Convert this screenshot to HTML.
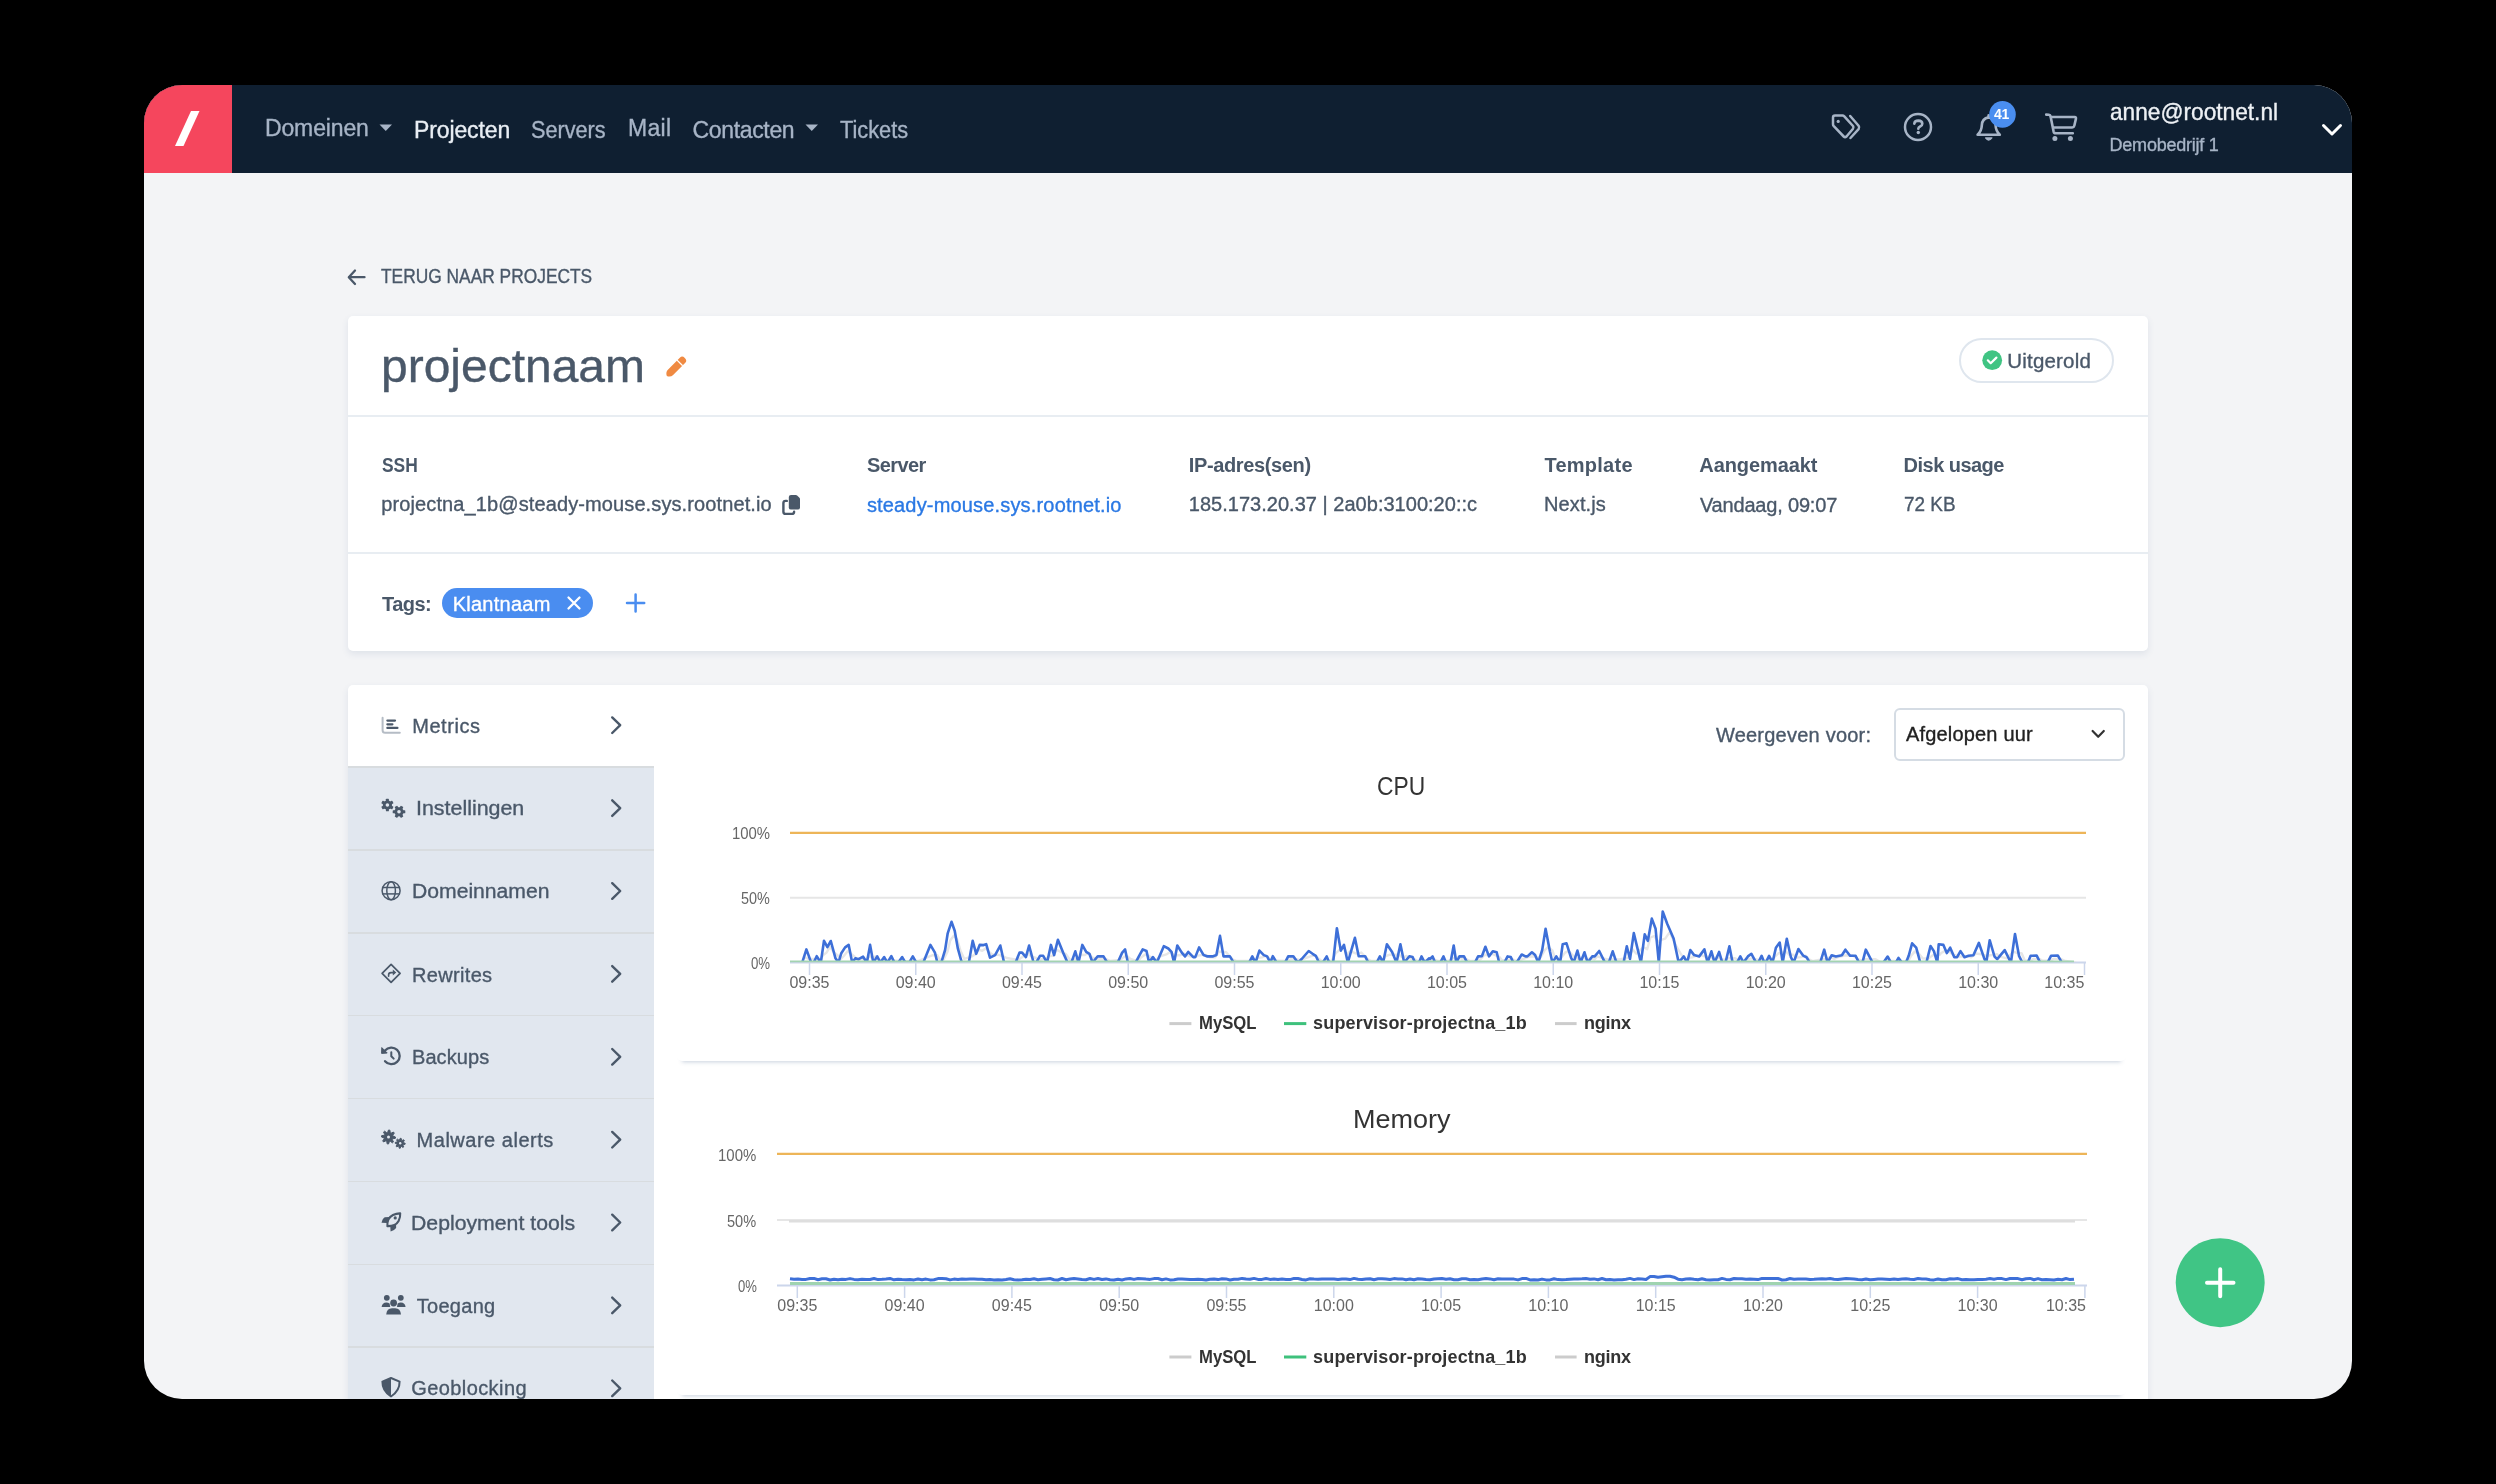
<!DOCTYPE html>
<html><head><meta charset='utf-8'><title>projectnaam</title>
<style>
html,body{margin:0;padding:0;background:#000;}
body{width:2496px;height:1484px;overflow:hidden;position:relative;font-family:"Liberation Sans",sans-serif;}
#win{position:absolute;left:0;top:0;width:2496px;height:1484px;background:#f3f4f6;clip-path:inset(85px 144px 85px 144px round 38px);}
.abs{position:absolute;box-sizing:content-box;}
.t{position:absolute;white-space:pre;line-height:1;}
#txt{position:absolute;left:0;top:0;width:2496px;height:1484px;will-change:transform;}
.card{background:#fff;border-radius:5px;box-shadow:0 3px 7px rgba(50,80,130,0.10);}
.chartcard{background:#fff;border-radius:5px;box-shadow:0 6px 4px -5px rgba(60,95,135,0.28);}
svg{position:absolute;left:0;top:0;}
</style></head><body>
<div id='win'>
<div class='abs' style='left:0;top:85px;width:2496px;height:88px;background:#0f1f31'></div><div class='abs' style='left:144px;top:85px;width:87.5px;height:88px;background:#f5465d'></div><div class='abs card' style='left:348px;top:315.5px;width:1800px;height:335.5px'></div><div class='abs' style='left:348px;top:414.5px;width:1800px;height:2px;background:#e8edf2'></div><div class='abs' style='left:348px;top:552px;width:1800px;height:2px;background:#e8edf2'></div><div class='abs' style='left:1959px;top:338px;width:151px;height:41px;border:2px solid #dfe6ee;border-radius:23px'></div><div class='abs' style='left:441.5px;top:588px;width:151px;height:30px;border-radius:15px;background:#4a8df0'></div><div class='abs card' style='left:348px;top:685px;width:1800px;height:760px'></div><div class='abs' style='left:348px;top:766.5px;width:306px;height:700px;background:#e1e7ef'></div><div class='abs' style='left:348px;top:766.25px;width:306px;height:1.5px;background:#d8dcdf'></div><div class='abs' style='left:348px;top:849.14px;width:306px;height:1.5px;background:#d8dcdf'></div><div class='abs' style='left:348px;top:932.03px;width:306px;height:1.5px;background:#d8dcdf'></div><div class='abs' style='left:348px;top:1014.92px;width:306px;height:1.5px;background:#d8dcdf'></div><div class='abs' style='left:348px;top:1097.81px;width:306px;height:1.5px;background:#d8dcdf'></div><div class='abs' style='left:348px;top:1180.70px;width:306px;height:1.5px;background:#d8dcdf'></div><div class='abs' style='left:348px;top:1263.59px;width:306px;height:1.5px;background:#d8dcdf'></div><div class='abs' style='left:348px;top:1346.48px;width:306px;height:1.5px;background:#d8dcdf'></div><div class='abs' style='left:1893.5px;top:707.7px;width:227.7px;height:49px;border:2px solid #d5dce4;border-radius:6px;background:#fff'></div><div class='abs chartcard' style='left:676.5px;top:780px;width:1449px;height:281px'></div><div class='abs chartcard' style='left:676.5px;top:1100px;width:1449px;height:295px'></div>
<svg width='2496' height='1484' viewBox='0 0 2496 1484'><polygon points='191,111 199.5,111 183.5,146 175,146' fill='#fff'/><polygon points='379.5,124.5 392,124.5 385.75,131' fill='#a7b4c6'/><polygon points='805.5,124.5 818,124.5 811.75,131' fill='#a7b4c6'/><path d='M1833,117.5 Q1833,115.5 1835,115.5 L1842.5,115.5 Q1843.5,115.5 1844.3,116.3 L1853,126 Q1854,127.5 1853,128.8 L1846.5,136.5 Q1845,137.8 1843.7,136.5 L1833.8,126.2 Q1833,125.3 1833,124.3 Z' fill='none' stroke='#a7b4c6' stroke-width='2.5' stroke-linejoin='round'/><circle cx='1838.2' cy='121.4' r='1.6' fill='#a7b4c6'/><path d='M1850.2,116 L1858.6,125.8 Q1859.8,127.5 1858.6,129.2 L1850.5,138' fill='none' stroke='#a7b4c6' stroke-width='2.5' stroke-linecap='round' stroke-linejoin='round'/><circle cx='1918' cy='127' r='13' fill='none' stroke='#a7b4c6' stroke-width='2.5'/><path d='M1914.3,123.6 Q1914.6,120.6 1918.3,120.6 Q1922.3,120.7 1922.3,123.7 Q1922.3,125.5 1920.1,126.5 Q1918.3,127.3 1918.3,128.7' fill='none' stroke='#a7b4c6' stroke-width='2.6' stroke-linecap='round' stroke-linejoin='round'/><circle cx='1918.3' cy='132.5' r='1.7' fill='#a7b4c6'/><path d='M1977.6,134.8 Q1981.6,131 1981.8,125.4 Q1982,118.6 1988.6,117.4 Q1995.4,118.6 1995.6,125.4 Q1995.8,131 1999.8,134.8 Z' fill='none' stroke='#a7b4c6' stroke-width='2.6' stroke-linejoin='round'/><path d='M1985.6,137.9 Q1988.7,142.2 1991.8,137.9 Z' fill='#a7b4c6' stroke='#a7b4c6' stroke-width='1.4' stroke-linejoin='round'/><line x1='1988.6' y1='115.4' x2='1988.6' y2='117.4' stroke='#a7b4c6' stroke-width='2.6' stroke-linecap='round'/><circle cx='2002.5' cy='114.4' r='13.3' fill='#4a8ef0'/><path d='M2046.2,114.6 L2048.8,114.8 Q2050.3,115 2050.6,116.5 L2053.6,131.6 Q2054,133.3 2055.8,133.3 L2072.8,133.3' fill='none' stroke='#a7b4c6' stroke-width='2.6' stroke-linecap='round' stroke-linejoin='round'/><path d='M2051,117 L2074.6,117 Q2076.3,117.2 2075.9,118.9 L2074.3,125.8 Q2073.9,127.5 2072.2,127.5 L2053.2,127.5' fill='none' stroke='#a7b4c6' stroke-width='2.6' stroke-linecap='round' stroke-linejoin='round'/><circle cx='2054.9' cy='138.6' r='2.5' fill='#a7b4c6'/><circle cx='2070.4' cy='138.6' r='2.5' fill='#a7b4c6'/><polyline points='2323.5,125.5 2332,134 2340.5,125.5' fill='none' stroke='#fff' stroke-width='3' stroke-linecap='round' stroke-linejoin='round'/><polyline points='355,270.5 348.8,277.2 355,284' fill='none' stroke='#4a5869' stroke-width='2.3' stroke-linecap='round' stroke-linejoin='round'/><line x1='349.5' y1='277.2' x2='364.5' y2='277.2' stroke='#4a5869' stroke-width='2.3' stroke-linecap='round'/><g transform='translate(676.6,366.2) rotate(-45)'><path d='M-13.8,0 Q-12.2,-3.6 -8.6,-3.7 L8.6,-3.7 Q11.6,-3.7 11.6,0 Q11.6,3.7 8.6,3.7 L-8.6,3.7 Q-12.2,3.6 -13.8,0 Z' fill='#f08a42'/><line x1='4.6' y1='-4' x2='4.6' y2='4' stroke='#fff' stroke-width='1.3'/></g><circle cx='1992.2' cy='360.2' r='9.9' fill='#40c483'/><polyline points='1987.8,360.3 1990.7,363.2 1996.4,357.6' fill='none' stroke='#fff' stroke-width='2.2' stroke-linecap='round' stroke-linejoin='round'/><path d='M786.8,500.9 L785.6,500.9 Q783.4,500.9 783.4,503.1 L783.4,511.7 Q783.4,513.9 785.6,513.9 L791.9,513.9 Q794.1,513.9 794.1,511.7' fill='none' stroke='#4a5869' stroke-width='2.4' stroke-linecap='round'/><path d='M791,494.9 L795.8,494.9 Q796.6,494.9 797.4,495.7 L799.2,497.5 Q800,498.3 800,499.1 L800,507.4 Q800,509.6 797.8,509.6 L791,509.6 Q788.8,509.6 788.8,507.4 L788.8,497.1 Q788.8,494.9 791,494.9 Z' fill='#4a5869'/><path d='M568.5,597.5 L579.5,608.5 M579.5,597.5 L568.5,608.5' stroke='#fff' stroke-width='2.3' stroke-linecap='round'/><path d='M627,603 L644.2,603 M635.6,594.5 L635.6,611.5' stroke='#4a8df0' stroke-width='2.5' stroke-linecap='round'/><polyline points='612.2,717.4 620.2,725.2 612.2,733.0' fill='none' stroke='#4a5869' stroke-width='2.4' stroke-linecap='round' stroke-linejoin='round'/><polyline points='612.2,800.3 620.2,808.1 612.2,815.9' fill='none' stroke='#4a5869' stroke-width='2.4' stroke-linecap='round' stroke-linejoin='round'/><polyline points='612.2,883.2 620.2,891.0 612.2,898.8' fill='none' stroke='#4a5869' stroke-width='2.4' stroke-linecap='round' stroke-linejoin='round'/><polyline points='612.2,966.1 620.2,973.9 612.2,981.7' fill='none' stroke='#4a5869' stroke-width='2.4' stroke-linecap='round' stroke-linejoin='round'/><polyline points='612.2,1049.0 620.2,1056.8 612.2,1064.6' fill='none' stroke='#4a5869' stroke-width='2.4' stroke-linecap='round' stroke-linejoin='round'/><polyline points='612.2,1131.9 620.2,1139.7 612.2,1147.5' fill='none' stroke='#4a5869' stroke-width='2.4' stroke-linecap='round' stroke-linejoin='round'/><polyline points='612.2,1214.7 620.2,1222.5 612.2,1230.3' fill='none' stroke='#4a5869' stroke-width='2.4' stroke-linecap='round' stroke-linejoin='round'/><polyline points='612.2,1297.6 620.2,1305.4 612.2,1313.2' fill='none' stroke='#4a5869' stroke-width='2.4' stroke-linecap='round' stroke-linejoin='round'/><polyline points='612.2,1380.5 620.2,1388.3 612.2,1396.1' fill='none' stroke='#4a5869' stroke-width='2.4' stroke-linecap='round' stroke-linejoin='round'/><path d='M382.6,717.8 L382.6,730.2 Q382.6,732.7 385.1,732.7 L399.8,732.7' fill='none' stroke='#b5bcc5' stroke-width='2' stroke-linecap='round'/><path d='M387.4,720.6 L395,720.6 M387.4,724.3 L392.4,724.3 M387.4,727.9 L397.4,727.9' stroke='#4a5869' stroke-width='2.3' stroke-linecap='round'/><g transform='translate(387.4,805.0)'><circle r='4.6' fill='#4a5869'/><rect x='-1.50' y='-6.30' width='3.00' height='6.30' rx='0.6' fill='#4a5869' transform='rotate(0.0)'/><rect x='-1.50' y='-6.30' width='3.00' height='6.30' rx='0.6' fill='#4a5869' transform='rotate(60.0)'/><rect x='-1.50' y='-6.30' width='3.00' height='6.30' rx='0.6' fill='#4a5869' transform='rotate(120.0)'/><rect x='-1.50' y='-6.30' width='3.00' height='6.30' rx='0.6' fill='#4a5869' transform='rotate(180.0)'/><rect x='-1.50' y='-6.30' width='3.00' height='6.30' rx='0.6' fill='#4a5869' transform='rotate(240.0)'/><rect x='-1.50' y='-6.30' width='3.00' height='6.30' rx='0.6' fill='#4a5869' transform='rotate(300.0)'/><circle r='1.8' fill='#e1e7ef'/></g><g transform='translate(399.0,811.8)'><circle r='4.6' fill='#4a5869'/><rect x='-1.50' y='-6.30' width='3.00' height='6.30' rx='0.6' fill='#4a5869' transform='rotate(90.0)'/><rect x='-1.50' y='-6.30' width='3.00' height='6.30' rx='0.6' fill='#4a5869' transform='rotate(150.0)'/><rect x='-1.50' y='-6.30' width='3.00' height='6.30' rx='0.6' fill='#4a5869' transform='rotate(210.0)'/><rect x='-1.50' y='-6.30' width='3.00' height='6.30' rx='0.6' fill='#4a5869' transform='rotate(270.0)'/><rect x='-1.50' y='-6.30' width='3.00' height='6.30' rx='0.6' fill='#4a5869' transform='rotate(330.0)'/><rect x='-1.50' y='-6.30' width='3.00' height='6.30' rx='0.6' fill='#4a5869' transform='rotate(390.0)'/><circle r='1.8' fill='#e1e7ef'/></g><g fill='none' stroke='#4a5869' stroke-width='1.5'><circle cx='391.1' cy='890.7' r='9'/><ellipse cx='391.1' cy='890.7' rx='4.3' ry='9'/><line x1='382.3' y1='887.5' x2='399.9' y2='887.5'/><line x1='382.3' y1='893.9' x2='399.9' y2='893.9'/></g><path d='M391.1,964.3 L400.1,973.3 L391.1,982.3 L382.1,973.3 Z' fill='none' stroke='#4a5869' stroke-width='1.7' stroke-linejoin='round'/><path d='M388.6,976.2 L388.6,975 Q388.6,972.6 391,972.6 L394.5,972.6' fill='none' stroke='#4a5869' stroke-width='1.6' stroke-linecap='round'/><polygon points='392.8,969.6 396.3,972.6 392.8,975.6' fill='#4a5869'/><path d='M385.04,1050.56 A8.3,8.3 0 1 1 385.04,1061.24' fill='none' stroke='#4a5869' stroke-width='2.3' stroke-linecap='round'/><polygon points='381.8,1047.6 387.2,1053 381.6,1053.4' fill='#4a5869' stroke='#4a5869' stroke-width='1' stroke-linejoin='round'/><polyline points='391.3,1052.2 391.3,1056.2 393.7,1058.6' fill='none' stroke='#4a5869' stroke-width='2' stroke-linecap='round' stroke-linejoin='round'/><path d='M388.50,1130.00 L389.87,1130.13 L390.26,1132.75 L391.06,1133.18 L393.45,1132.05 L394.32,1133.11 L392.75,1135.24 L393.01,1136.10 L395.50,1137.00 L395.37,1138.37 L392.75,1138.76 L392.32,1139.56 L393.45,1141.95 L392.39,1142.82 L390.26,1141.25 L389.40,1141.51 L388.50,1144.00 L387.13,1143.87 L386.74,1141.25 L385.94,1140.82 L383.55,1141.95 L382.68,1140.89 L384.25,1138.76 L383.99,1137.90 L381.50,1137.00 L381.63,1135.63 L384.25,1135.24 L384.68,1134.44 L383.55,1132.05 L384.61,1131.18 L386.74,1132.75 L387.60,1132.49Z' fill='#4a5869' stroke='#4a5869' stroke-width='1' stroke-linejoin='round'/><circle cx='388.5' cy='1137.0' r='1.5' fill='#e1e7ef'/><path d='M400.20,1138.30 L401.18,1138.40 L401.50,1140.16 L402.09,1140.47 L403.74,1139.76 L404.36,1140.52 L403.34,1142.00 L403.53,1142.64 L405.20,1143.30 L405.10,1144.28 L403.34,1144.60 L403.03,1145.19 L403.74,1146.84 L402.98,1147.46 L401.50,1146.44 L400.86,1146.63 L400.20,1148.30 L399.22,1148.20 L398.90,1146.44 L398.31,1146.13 L396.66,1146.84 L396.04,1146.08 L397.06,1144.60 L396.87,1143.96 L395.20,1143.30 L395.30,1142.32 L397.06,1142.00 L397.37,1141.41 L396.66,1139.76 L397.42,1139.14 L398.90,1140.16 L399.54,1139.97Z' fill='#4a5869' stroke='#4a5869' stroke-width='1' stroke-linejoin='round'/><circle cx='400.2' cy='1143.3' r='1.2' fill='#e1e7ef'/><path d='M387.4,1226.1 Q386.8,1218 393,1215 Q396.5,1213.3 400.2,1213.4 Q400.5,1217.3 398.6,1220.9 Q395.6,1226.3 387.4,1226.1 Z' fill='none' stroke='#4a5869' stroke-width='2.1' stroke-linejoin='round'/><circle cx='395.2' cy='1217.9' r='1.6' fill='#4a5869'/><path d='M389.2,1216.9 L384.8,1217.3 Q382.6,1218.4 381.5,1222.8 L386.9,1222.9 Z' fill='#4a5869'/><path d='M396.1,1224 L396.1,1227.9 Q394.6,1230.2 390.6,1231.4 L390.3,1226.2 Z' fill='#4a5869'/><g fill='#4a5869'><circle cx='386.8' cy='1297.8' r='2.9'/><circle cx='400.8' cy='1297.8' r='2.9'/><circle cx='393.6' cy='1303' r='3.4'/><path d='M381.6,1307 Q382.2,1302.5 386.4,1302.5 Q388.2,1302.5 389.6,1303.6 Q389.9,1305.5 390.2,1307 Z'/><path d='M405.6,1307 Q405,1302.5 400.8,1302.5 Q399,1302.5 397.6,1303.6 Q397.3,1305.5 397,1307 Z'/><path d='M386.2,1314.5 Q386.8,1308.3 392,1308.3 L395.2,1308.3 Q400.4,1308.3 401,1314.5 Z'/></g><path d='M391,1378 L399.6,1381.6 Q399.8,1391 391,1396.5 Q382.2,1391 382.4,1381.6 Z' fill='none' stroke='#4a5869' stroke-width='2' stroke-linejoin='round'/><path d='M391,1378 L382.4,1381.6 Q382.2,1391 391,1396.5 Z' fill='#4a5869'/><polyline points='2092.6,731 2098.2,736.8 2103.8,731' fill='none' stroke='#333' stroke-width='2.2' stroke-linecap='round' stroke-linejoin='round'/><line x1='809.5' y1='962.4' x2='809.5' y2='975' stroke='#ccd6eb' stroke-width='1.5'/><line x1='797.3' y1='1285.6' x2='797.3' y2='1298' stroke='#ccd6eb' stroke-width='1.5'/><line x1='915.75' y1='962.4' x2='915.75' y2='975' stroke='#ccd6eb' stroke-width='1.5'/><line x1='904.5999999999999' y1='1285.6' x2='904.5999999999999' y2='1298' stroke='#ccd6eb' stroke-width='1.5'/><line x1='1022.0' y1='962.4' x2='1022.0' y2='975' stroke='#ccd6eb' stroke-width='1.5'/><line x1='1011.9' y1='1285.6' x2='1011.9' y2='1298' stroke='#ccd6eb' stroke-width='1.5'/><line x1='1128.25' y1='962.4' x2='1128.25' y2='975' stroke='#ccd6eb' stroke-width='1.5'/><line x1='1119.1999999999998' y1='1285.6' x2='1119.1999999999998' y2='1298' stroke='#ccd6eb' stroke-width='1.5'/><line x1='1234.5' y1='962.4' x2='1234.5' y2='975' stroke='#ccd6eb' stroke-width='1.5'/><line x1='1226.5' y1='1285.6' x2='1226.5' y2='1298' stroke='#ccd6eb' stroke-width='1.5'/><line x1='1340.75' y1='962.4' x2='1340.75' y2='975' stroke='#ccd6eb' stroke-width='1.5'/><line x1='1333.8' y1='1285.6' x2='1333.8' y2='1298' stroke='#ccd6eb' stroke-width='1.5'/><line x1='1447.0' y1='962.4' x2='1447.0' y2='975' stroke='#ccd6eb' stroke-width='1.5'/><line x1='1441.1' y1='1285.6' x2='1441.1' y2='1298' stroke='#ccd6eb' stroke-width='1.5'/><line x1='1553.25' y1='962.4' x2='1553.25' y2='975' stroke='#ccd6eb' stroke-width='1.5'/><line x1='1548.4' y1='1285.6' x2='1548.4' y2='1298' stroke='#ccd6eb' stroke-width='1.5'/><line x1='1659.5' y1='962.4' x2='1659.5' y2='975' stroke='#ccd6eb' stroke-width='1.5'/><line x1='1655.6999999999998' y1='1285.6' x2='1655.6999999999998' y2='1298' stroke='#ccd6eb' stroke-width='1.5'/><line x1='1765.75' y1='962.4' x2='1765.75' y2='975' stroke='#ccd6eb' stroke-width='1.5'/><line x1='1763.0' y1='1285.6' x2='1763.0' y2='1298' stroke='#ccd6eb' stroke-width='1.5'/><line x1='1872.0' y1='962.4' x2='1872.0' y2='975' stroke='#ccd6eb' stroke-width='1.5'/><line x1='1870.3' y1='1285.6' x2='1870.3' y2='1298' stroke='#ccd6eb' stroke-width='1.5'/><line x1='1978.25' y1='962.4' x2='1978.25' y2='975' stroke='#ccd6eb' stroke-width='1.5'/><line x1='1977.6' y1='1285.6' x2='1977.6' y2='1298' stroke='#ccd6eb' stroke-width='1.5'/><line x1='2084.5' y1='962.4' x2='2084.5' y2='975' stroke='#ccd6eb' stroke-width='1.5'/><line x1='2084.8999999999996' y1='1285.6' x2='2084.8999999999996' y2='1298' stroke='#ccd6eb' stroke-width='1.5'/><line x1='790' y1='897.8' x2='2086' y2='897.8' stroke='#e6e6e6' stroke-width='2'/><line x1='790' y1='962.4' x2='2086' y2='962.4' stroke='#ccd6eb' stroke-width='2'/><line x1='790' y1='832.8' x2='2086' y2='832.8' stroke='#edb558' stroke-width='2.2'/><line x1='777' y1='1220' x2='2087' y2='1220' stroke='#e6e6e6' stroke-width='2'/><line x1='777' y1='1285.6' x2='2087' y2='1285.6' stroke='#ccd6eb' stroke-width='2'/><line x1='777' y1='1153.9' x2='2087' y2='1153.9' stroke='#edb558' stroke-width='2.2'/><polyline clip-path='url(#cpuclip)' points='804.7,957.3 808.9,959.0 813.7,959.0 816.2,960.8 819.2,960.8 823.3,955.0 826.5,952.6 829.9,946.9 833.3,951.6 838.0,955.7 841.0,958.9 843.8,956.0 847.6,951.3 851.2,953.8 854.7,956.7 857.9,960.5 861.1,958.9 865.6,960.1 869.4,956.3 872.6,957.8 875.8,956.2 879.7,960.9 882.9,959.4 886.7,961.1 889.9,959.4 893.8,960.8 897.0,960.8 900.8,961.1 904.7,961.1 907.9,961.1 911.7,960.9 915.3,960.9 918.8,960.9 925.8,957.8 932.9,955.2 937.4,955.2 939.9,959.9 943.8,959.2 947.6,951.4 950.2,940.5 954.0,935.4 957.2,939.5 960.4,950.4 964.3,958.9 971.3,956.7 975.2,954.4 978.7,949.7 982.2,950.8 986.1,948.3 988.7,951.7 992.5,954.4 997.6,954.7 1002.8,956.0 1006.6,958.0 1018.1,959.9 1022.0,957.2 1024.6,955.7 1028.4,953.8 1031.6,956.5 1036.1,958.0 1038.7,960.7 1042.5,958.9 1045.7,958.9 1049.6,956.0 1053.4,955.8 1056.6,949.7 1060.4,951.8 1065.6,953.8 1070.1,959.9 1073.9,959.5 1077.8,959.5 1081.0,954.8 1084.8,955.0 1088.7,952.7 1091.9,957.4 1095.1,958.5 1100.2,959.2 1106.0,959.2 1109.8,960.9 1120.2,959.9 1124.7,956.4 1127.6,956.4 1130.4,959.0 1138.1,961.3 1140.7,957.7 1145.2,954.6 1149.0,955.9 1151.6,958.0 1155.4,961.1 1159.3,956.7 1166.3,954.4 1170.8,951.6 1174.0,955.9 1176.6,955.2 1179.8,955.3 1184.3,953.7 1187.5,955.4 1190.7,956.6 1195.8,956.8 1197.8,955.6 1201.6,955.0 1206.1,954.9 1209.9,957.3 1215.1,957.3 1218.9,951.8 1222.5,951.8 1226.0,952.1 1232.4,959.3 1236.2,960.9 1251.6,960.9 1254.8,960.9 1258.0,957.7 1261.9,957.4 1266.3,955.7 1269.6,958.9 1272.8,959.2 1275.3,960.8 1279.2,960.8 1287.5,960.9 1290.7,959.2 1295.8,959.2 1300.3,959.9 1304.2,958.5 1311.2,956.2 1315.1,955.3 1318.3,958.4 1321.5,960.7 1325.3,960.9 1329.2,960.9 1331.7,960.9 1335.6,953.4 1339.4,950.2 1343.3,945.5 1346.5,954.6 1350.3,951.2 1357.4,954.2 1361.2,952.5 1367.6,959.1 1370.8,960.8 1379.2,960.9 1382.4,960.9 1385.6,956.0 1389.4,954.8 1394.6,954.8 1399.0,954.8 1402.9,957.7 1406.7,955.9 1411.9,959.4 1415.1,959.4 1417.6,961.1 1421.5,960.9 1424.0,960.9 1427.2,959.8 1431.7,960.5 1432.5,958.8 1435.1,959.9 1437.6,960.9 1442.8,960.9 1446.0,960.9 1448.5,960.9 1453.0,958.0 1456.2,958.0 1458.8,956.4 1462.0,959.3 1466.5,959.3 1469.7,960.9 1477.4,960.9 1480.6,959.2 1484.4,955.0 1487.9,955.0 1491.5,953.7 1495.3,955.1 1499.2,956.8 1501.7,959.8 1506.9,960.9 1510.1,959.4 1513.3,959.4 1515.8,961.1 1519.0,960.4 1524.2,958.7 1528.0,957.1 1529.9,956.5 1534.4,956.2 1537.6,957.8 1540.8,957.2 1544.7,950.2 1548.1,947.2 1552.4,950.5 1554.9,957.9 1558.8,960.9 1562.6,956.0 1565.2,952.5 1569.0,951.2 1573.5,956.1 1576.1,958.1 1579.9,959.4 1583.1,956.6 1587.0,959.8 1590.2,958.2 1594.7,959.3 1597.2,956.2 1601.7,957.8 1607.5,959.5 1611.3,959.5 1615.2,959.5 1619.0,959.5 1626.1,958.2 1629.3,957.2 1632.5,949.3 1636.3,953.7 1643.4,947.2 1647.2,949.2 1650.4,937.5 1654.3,936.0 1658.1,941.8 1661.3,939.9 1665.2,938.6 1669.7,932.1 1676.1,945.8 1681.2,954.5 1686.3,960.9 1689.6,957.5 1692.8,957.2 1696.6,955.6 1701.7,955.4 1706.9,957.4 1710.1,956.0 1713.9,959.5 1717.1,956.7 1721.6,959.7 1724.8,959.7 1728.0,958.2 1731.9,958.2 1735.1,958.2 1739.6,960.9 1742.8,960.9 1746.0,959.3 1750.4,958.6 1753.9,958.6 1758.6,960.2 1760.7,960.8 1764.1,960.8 1766.8,960.8 1768.2,960.8 1771.6,960.8 1775.0,956.8 1778.4,953.2 1782.2,953.2 1785.2,950.9 1789.3,954.8 1793.4,954.8 1796.1,957.5 1800.9,957.1 1805.6,955.6 1809.0,959.2 1812.4,961.1 1822.7,959.1 1826.7,959.1 1830.1,957.1 1834.2,959.0 1838.3,957.0 1844.4,955.5 1847.9,955.3 1852.6,955.5 1858.1,959.0 1861.5,960.8 1864.9,959.1 1868.3,959.1 1875.1,959.1 1881.2,962.6 1886.0,960.9 1890.1,960.9 1893.5,960.9 1898.3,961.3 1901.0,961.3 1904.4,961.3 1908.5,960.8 1911.2,955.6 1914.6,951.6 1918.7,953.4 1922.8,958.6 1928.9,958.1 1933.0,955.1 1936.4,955.1 1939.8,954.6 1941.2,953.0 1945.9,950.4 1949.3,951.3 1952.7,954.6 1956.8,955.7 1959.6,956.6 1963.0,956.6 1967.0,956.2 1971.1,957.3 1975.9,953.5 1981.4,954.2 1986.8,956.2 1988.8,955.5 1992.2,955.0 1997.0,954.1 1999.7,956.7 2007.2,958.3 2013.4,951.6 2017.5,953.1 2021.5,953.1 2024.9,960.8 2030.4,960.8 2033.1,958.9 2039.2,958.9 2042.7,960.7 2050.1,960.8 2053.5,958.9 2060.4,958.9 2064.4,960.7 2076.2,962.6' fill='none' stroke='#e6e6e6' stroke-width='2.4' stroke-linejoin='round'/><clipPath id='cpuclip'><rect x='780' y='820' width='1320' height='142.0'/></clipPath><polyline clip-path='url(#cpuclip)' points='802.2,962.6 806.4,949.4 811.2,962.6 813.7,962.6 816.7,956.2 820.8,962.6 824.0,940.8 827.4,947.2 830.8,941.0 835.5,958.3 838.5,962.6 841.3,953.2 845.1,947.4 848.7,944.9 852.2,962.6 855.4,958.3 858.6,959.2 863.1,956.7 866.9,962.6 870.1,944.9 873.3,962.6 877.2,956.4 880.4,962.6 884.2,957.1 887.4,962.6 891.3,956.2 894.5,962.6 898.3,962.6 902.2,957.1 905.4,962.6 909.2,962.6 912.8,956.4 916.3,962.6 923.3,962.6 930.4,944.9 934.9,952.6 937.4,962.6 941.3,962.6 945.1,950.0 947.7,933.3 951.5,921.8 954.7,930.8 957.9,948.7 961.8,962.6 968.8,962.6 972.7,940.8 976.2,953.8 979.7,944.9 983.6,945.1 986.2,944.2 990.0,957.7 995.1,955.1 1000.3,945.5 1004.1,962.6 1015.6,962.6 1019.5,952.6 1022.1,952.6 1025.9,957.1 1029.1,945.5 1033.6,962.6 1036.2,962.6 1040.0,955.8 1043.2,955.8 1047.1,962.6 1050.9,944.9 1054.1,955.1 1057.9,939.7 1063.1,952.6 1067.6,962.6 1071.4,962.6 1075.3,951.3 1078.5,962.6 1082.3,944.9 1086.2,951.9 1089.4,953.8 1092.6,962.6 1097.7,956.2 1103.5,956.4 1107.3,962.6 1117.7,962.6 1122.2,952.6 1125.1,949.4 1127.9,962.6 1135.6,962.6 1138.2,957.7 1142.7,949.4 1146.5,951.0 1149.1,962.6 1152.9,957.1 1156.8,962.6 1163.8,946.2 1168.3,948.5 1171.5,951.9 1174.1,962.6 1177.3,945.5 1181.8,952.6 1185.0,956.4 1188.2,951.9 1193.3,957.1 1195.3,957.1 1199.1,947.4 1203.6,955.1 1207.4,956.4 1212.6,956.4 1216.4,955.1 1220.0,935.9 1223.5,956.4 1229.9,956.4 1233.7,962.6 1249.1,962.6 1252.3,956.4 1255.5,962.6 1259.4,950.6 1263.8,955.1 1267.1,956.4 1270.3,962.6 1272.8,956.2 1276.7,962.6 1285.0,962.6 1288.2,956.4 1293.3,956.2 1297.8,962.6 1301.7,959.0 1308.7,951.0 1312.6,953.8 1315.8,955.8 1319.0,962.6 1322.8,962.6 1326.7,956.4 1329.2,962.6 1333.1,962.6 1336.9,928.2 1340.8,950.6 1344.0,944.9 1347.8,962.6 1354.9,937.8 1358.7,956.2 1365.1,956.2 1368.3,962.6 1376.7,962.6 1379.9,956.4 1383.1,962.6 1386.9,944.2 1392.1,951.9 1396.5,962.6 1400.4,944.2 1404.2,962.6 1409.4,956.2 1412.6,957.1 1415.1,962.6 1419.0,962.6 1421.5,956.4 1424.7,962.6 1429.2,958.3 1430.0,959.0 1432.6,956.4 1435.1,962.6 1440.3,962.6 1443.5,956.4 1446.0,962.6 1450.5,962.6 1453.7,945.5 1456.3,962.6 1459.5,956.4 1464.0,956.4 1467.2,962.6 1474.9,962.6 1478.1,956.4 1481.9,956.2 1485.4,946.8 1489.0,956.4 1492.8,951.3 1496.7,952.3 1499.2,962.6 1504.4,962.6 1507.6,956.4 1510.8,957.1 1513.3,962.6 1516.5,962.6 1521.7,954.5 1525.5,956.4 1527.4,956.4 1531.9,952.3 1535.1,955.1 1538.3,962.6 1542.2,950.0 1545.6,928.8 1549.9,951.3 1552.4,962.6 1556.3,956.4 1560.1,962.6 1562.7,944.2 1566.5,943.3 1571.0,957.7 1573.6,962.6 1577.4,950.6 1580.6,962.6 1584.5,952.3 1587.7,962.6 1592.2,956.4 1594.7,956.4 1599.2,951.0 1605.0,962.6 1608.8,962.6 1612.7,951.3 1616.5,962.6 1623.6,962.6 1626.8,946.2 1630.0,959.0 1633.8,933.1 1640.9,962.6 1644.7,934.4 1647.9,940.8 1651.8,918.6 1655.6,928.8 1658.8,962.6 1662.7,911.5 1667.2,923.7 1673.6,938.5 1678.7,962.6 1683.8,956.4 1687.1,962.6 1690.3,950.0 1694.1,955.1 1699.2,956.4 1704.4,949.4 1707.6,962.6 1711.4,951.3 1714.6,962.6 1719.1,951.9 1722.3,962.6 1725.5,962.6 1729.4,946.2 1732.6,962.6 1737.1,962.6 1740.3,956.4 1743.5,962.6 1747.9,956.4 1751.4,953.8 1756.1,962.6 1758.2,962.6 1761.6,955.8 1764.3,962.6 1765.7,962.6 1769.1,955.8 1772.5,962.6 1775.9,947.7 1779.7,942.5 1782.7,962.6 1786.8,938.8 1790.9,957.2 1793.6,962.6 1798.4,949.0 1803.1,955.6 1806.5,957.2 1809.9,962.6 1820.2,962.6 1824.2,949.7 1827.6,962.6 1831.7,955.2 1835.8,956.5 1841.9,955.2 1845.4,949.7 1850.1,955.8 1855.6,955.8 1859.0,962.6 1862.4,962.6 1865.8,949.7 1872.6,962.6 1878.7,962.6 1883.5,962.6 1887.6,956.5 1891.0,962.6 1895.8,962.6 1898.5,957.9 1901.9,962.6 1906.0,962.6 1908.7,955.8 1912.1,943.3 1916.2,947.7 1920.3,962.6 1926.4,962.6 1930.5,946.0 1933.9,951.1 1937.3,962.6 1938.7,944.3 1943.4,944.9 1946.8,953.1 1950.2,947.7 1954.3,957.2 1957.1,957.2 1960.5,951.1 1964.5,957.2 1968.6,955.8 1973.4,955.2 1978.9,942.9 1984.3,958.6 1986.3,962.6 1989.7,940.2 1994.5,956.5 1997.2,959.2 2004.7,950.1 2010.9,962.6 2015.0,934.0 2019.0,955.8 2022.4,962.6 2027.9,962.6 2030.6,955.8 2036.7,955.6 2040.2,962.6 2047.6,962.6 2051.0,955.8 2057.9,955.6 2061.9,962.6 2073.7,962.6' fill='none' stroke='#3d6fd8' stroke-width='2.6' stroke-linejoin='round'/><line x1='790' y1='961.4' x2='2074' y2='961.4' stroke='#a3d3b1' stroke-width='1.8'/><line x1='789' y1='1221.2' x2='2075' y2='1221.2' stroke='#dedede' stroke-width='2.4'/><line x1='790' y1='1283.4' x2='2075' y2='1283.4' stroke='#9fd3b0' stroke-width='3'/><polyline points='790.0,1278.8 794.0,1279.3 798.0,1279.0 802.0,1279.4 806.0,1279.4 810.0,1278.5 814.0,1278.4 818.0,1279.7 822.0,1278.8 826.0,1278.8 830.0,1280.0 834.0,1279.2 838.0,1279.7 842.0,1279.2 846.0,1279.4 850.0,1278.6 854.0,1279.4 858.0,1279.8 862.0,1279.2 866.0,1279.6 870.0,1279.5 874.0,1278.5 878.0,1279.6 882.0,1279.3 886.0,1278.9 890.0,1278.4 894.0,1279.8 898.0,1279.2 902.0,1279.6 906.0,1279.8 910.0,1279.5 914.0,1279.9 918.0,1279.0 922.0,1279.7 926.0,1279.1 930.0,1279.9 934.0,1279.8 938.0,1278.6 942.0,1278.6 946.0,1278.7 950.0,1279.9 954.0,1279.1 958.0,1279.4 962.0,1278.9 966.0,1279.2 970.0,1279.0 974.0,1279.0 978.0,1279.3 982.0,1279.3 986.0,1279.8 990.0,1279.5 994.0,1279.9 998.0,1279.8 1002.0,1280.0 1006.0,1279.5 1010.0,1278.7 1014.0,1279.8 1018.0,1279.9 1022.0,1279.8 1026.0,1279.3 1030.0,1279.5 1034.0,1278.7 1038.0,1279.7 1042.0,1279.3 1046.0,1278.9 1050.0,1278.5 1054.0,1279.8 1058.0,1280.0 1062.0,1278.5 1066.0,1279.7 1070.0,1279.1 1074.0,1278.6 1078.0,1278.9 1082.0,1279.6 1086.0,1279.8 1090.0,1278.5 1094.0,1279.4 1098.0,1278.5 1102.0,1279.5 1106.0,1278.9 1110.0,1279.8 1114.0,1280.0 1118.0,1279.2 1122.0,1280.0 1126.0,1278.9 1130.0,1278.5 1134.0,1279.4 1138.0,1278.5 1142.0,1278.7 1146.0,1279.1 1150.0,1279.4 1154.0,1278.6 1158.0,1278.5 1162.0,1279.8 1166.0,1278.9 1170.0,1279.9 1174.0,1279.8 1178.0,1279.0 1182.0,1279.1 1186.0,1279.2 1190.0,1279.4 1194.0,1279.4 1198.0,1279.3 1202.0,1279.4 1206.0,1279.9 1210.0,1279.2 1214.0,1279.1 1218.0,1279.6 1222.0,1278.8 1226.0,1278.9 1230.0,1280.0 1234.0,1279.2 1238.0,1279.3 1242.0,1278.4 1246.0,1279.1 1250.0,1279.3 1254.0,1278.4 1258.0,1279.4 1262.0,1279.4 1266.0,1278.5 1270.0,1279.4 1274.0,1279.1 1278.0,1279.5 1282.0,1279.0 1286.0,1279.5 1290.0,1279.6 1294.0,1278.4 1298.0,1278.5 1302.0,1279.5 1306.0,1279.9 1310.0,1278.8 1314.0,1279.1 1318.0,1279.3 1322.0,1278.9 1326.0,1279.0 1330.0,1278.9 1334.0,1279.0 1338.0,1279.4 1342.0,1278.9 1346.0,1279.0 1350.0,1279.6 1354.0,1278.4 1358.0,1279.3 1362.0,1279.6 1366.0,1278.9 1370.0,1278.8 1374.0,1279.7 1378.0,1278.8 1382.0,1278.7 1386.0,1279.1 1390.0,1279.5 1394.0,1278.6 1398.0,1278.9 1402.0,1278.9 1406.0,1279.7 1410.0,1279.1 1414.0,1279.8 1418.0,1278.7 1422.0,1278.9 1426.0,1279.4 1430.0,1279.8 1434.0,1279.1 1438.0,1278.8 1442.0,1278.6 1446.0,1279.2 1450.0,1278.7 1454.0,1279.7 1458.0,1279.7 1462.0,1278.7 1466.0,1278.8 1470.0,1279.7 1474.0,1279.4 1478.0,1279.7 1482.0,1279.0 1486.0,1278.6 1490.0,1278.9 1494.0,1279.7 1498.0,1278.8 1502.0,1279.0 1506.0,1279.1 1510.0,1279.1 1514.0,1279.1 1518.0,1279.9 1522.0,1278.6 1526.0,1278.4 1530.0,1279.9 1534.0,1279.8 1538.0,1280.0 1542.0,1279.1 1546.0,1279.9 1550.0,1279.9 1554.0,1278.8 1558.0,1279.6 1562.0,1279.7 1566.0,1279.5 1570.0,1279.2 1574.0,1278.9 1578.0,1278.9 1582.0,1278.8 1586.0,1278.5 1590.0,1279.3 1594.0,1278.9 1598.0,1279.7 1602.0,1278.5 1606.0,1279.8 1610.0,1279.5 1614.0,1279.9 1618.0,1279.8 1622.0,1279.8 1626.0,1279.3 1630.0,1278.4 1634.0,1279.6 1638.0,1278.7 1642.0,1278.9 1646.0,1279.5 1650.0,1276.6 1654.0,1276.5 1658.0,1277.3 1662.0,1276.8 1666.0,1276.3 1670.0,1276.2 1674.0,1277.2 1678.0,1279.2 1682.0,1279.7 1686.0,1279.0 1690.0,1278.7 1694.0,1279.3 1698.0,1279.7 1702.0,1278.7 1706.0,1279.7 1710.0,1279.9 1714.0,1279.7 1718.0,1279.7 1722.0,1278.4 1726.0,1279.4 1730.0,1279.8 1734.0,1278.5 1738.0,1278.8 1742.0,1278.8 1746.0,1279.2 1750.0,1279.1 1754.0,1279.2 1758.0,1279.6 1762.0,1278.4 1766.0,1278.5 1770.0,1278.6 1774.0,1278.6 1778.0,1278.5 1782.0,1280.0 1786.0,1279.8 1790.0,1278.5 1794.0,1279.2 1798.0,1278.9 1802.0,1278.9 1806.0,1279.0 1810.0,1279.4 1814.0,1279.3 1818.0,1279.0 1822.0,1278.7 1826.0,1278.9 1830.0,1278.6 1834.0,1279.3 1838.0,1279.5 1842.0,1279.0 1846.0,1278.5 1850.0,1278.7 1854.0,1279.0 1858.0,1279.4 1862.0,1279.7 1866.0,1279.0 1870.0,1279.7 1874.0,1279.4 1878.0,1279.1 1882.0,1279.0 1886.0,1279.2 1890.0,1279.5 1894.0,1279.1 1898.0,1279.5 1902.0,1279.1 1906.0,1278.8 1910.0,1279.3 1914.0,1279.5 1918.0,1278.5 1922.0,1279.1 1926.0,1279.1 1930.0,1279.8 1934.0,1279.9 1938.0,1279.0 1942.0,1279.8 1946.0,1279.7 1950.0,1278.8 1954.0,1279.1 1958.0,1278.6 1962.0,1279.7 1966.0,1279.5 1970.0,1279.8 1974.0,1279.7 1978.0,1279.5 1982.0,1279.6 1986.0,1279.3 1990.0,1278.6 1994.0,1279.3 1998.0,1278.4 2002.0,1278.6 2006.0,1279.6 2010.0,1278.5 2014.0,1278.5 2018.0,1278.6 2022.0,1279.8 2026.0,1278.7 2030.0,1278.4 2034.0,1279.7 2038.0,1278.6 2042.0,1279.8 2046.0,1279.5 2050.0,1279.7 2054.0,1279.9 2058.0,1279.3 2062.0,1279.7 2066.0,1278.5 2070.0,1279.6 2074.0,1279.2' fill='none' stroke='#3d6fd8' stroke-width='3' stroke-linejoin='round'/><line x1='1169.4' y1='1023.6' x2='1191.4' y2='1023.6' stroke='#cccccc' stroke-width='3'/><line x1='1284' y1='1023.6' x2='1306.3' y2='1023.6' stroke='#3ec17c' stroke-width='3'/><line x1='1555' y1='1023.6' x2='1576.6' y2='1023.6' stroke='#cccccc' stroke-width='3'/><line x1='1169.4' y1='1357' x2='1191.4' y2='1357' stroke='#cccccc' stroke-width='3'/><line x1='1284' y1='1357' x2='1306.3' y2='1357' stroke='#3ec17c' stroke-width='3'/><line x1='1555' y1='1357' x2='1576.6' y2='1357' stroke='#cccccc' stroke-width='3'/><circle cx='2220.2' cy='1282.7' r='44.5' fill='#40c585'/><path d='M2207,1282.7 L2233.5,1282.7 M2220.2,1269.2 L2220.2,1296.2' stroke='#fff' stroke-width='4' stroke-linecap='round'/></svg>
<div id='txt'><div class='t' style='left:265.0px;top:117.0px;font-size:23px;font-weight:400;color:#a7b4c6;letter-spacing:-0.14px;-webkit-text-stroke:0.35px #a7b4c6;'>Domeinen</div><div class='t' style='left:414.0px;top:118.5px;font-size:23px;font-weight:400;color:#e9eef4;letter-spacing:-0.12px;-webkit-text-stroke:0.35px #e9eef4;'>Projecten</div><div class='t' style='left:530.5px;top:118.5px;font-size:23px;font-weight:400;color:#a7b4c6;letter-spacing:0.0px;-webkit-text-stroke:0.35px #a7b4c6;transform:scaleX(0.942);transform-origin:0 0;'>Servers</div><div class='t' style='left:628.0px;top:117.0px;font-size:23px;font-weight:400;color:#a7b4c6;letter-spacing:0.33px;-webkit-text-stroke:0.35px #a7b4c6;'>Mail</div><div class='t' style='left:692.6px;top:118.5px;font-size:23px;font-weight:400;color:#a7b4c6;letter-spacing:-0.35px;-webkit-text-stroke:0.35px #a7b4c6;'>Contacten</div><div class='t' style='left:839.7px;top:118.5px;font-size:23px;font-weight:400;color:#a7b4c6;letter-spacing:0.0px;-webkit-text-stroke:0.35px #a7b4c6;transform:scaleX(0.946);transform-origin:0 0;'>Tickets</div><div class='t' style='left:2109.6px;top:99.6px;font-size:24px;font-weight:400;color:#eef1f5;letter-spacing:0.0px;-webkit-text-stroke:0.35px #eef1f5;transform:scaleX(0.945);transform-origin:0 0;'>anne@rootnet.nl</div><div class='t' style='left:2109.6px;top:135.8px;font-size:18px;font-weight:400;color:#a7b4c6;letter-spacing:-0.24px;-webkit-text-stroke:0.35px #a7b4c6;'>Demobedrijf 1</div><div class='t' style='left:381.3px;top:267.4px;font-size:19.5px;font-weight:400;color:#4a5869;letter-spacing:0.0px;-webkit-text-stroke:0.35px #4a5869;transform:scaleX(0.89);transform-origin:0 0;'>TERUG NAAR PROJECTS</div><div class='t' style='left:381.0px;top:343.2px;font-size:46px;font-weight:400;color:#4a5869;letter-spacing:0.0px;-webkit-text-stroke:0.35px #4a5869;transform:scaleX(1.043);transform-origin:0 0;'>projectnaam</div><div class='t' style='left:2007.3px;top:350.6px;font-size:20.5px;font-weight:400;color:#4a5869;letter-spacing:0.19px;-webkit-text-stroke:0.35px #4a5869;'>Uitgerold</div><div class='t' style='left:381.7px;top:454.5px;font-size:20px;font-weight:700;color:#4a5869;letter-spacing:0.0px;transform:scaleX(0.87);transform-origin:0 0;'>SSH</div><div class='t' style='left:866.9px;top:454.5px;font-size:20px;font-weight:700;color:#4a5869;letter-spacing:-0.58px;'>Server</div><div class='t' style='left:1188.8px;top:454.5px;font-size:20px;font-weight:700;color:#4a5869;letter-spacing:-0.37px;'>IP-adres(sen)</div><div class='t' style='left:1544.4px;top:454.5px;font-size:20px;font-weight:700;color:#4a5869;letter-spacing:0.26px;'>Template</div><div class='t' style='left:1699.3px;top:454.5px;font-size:20px;font-weight:700;color:#4a5869;letter-spacing:-0.09px;'>Aangemaakt</div><div class='t' style='left:1903.6px;top:454.5px;font-size:20px;font-weight:700;color:#4a5869;letter-spacing:-0.53px;'>Disk usage</div><div class='t' style='left:381.3px;top:494.2px;font-size:20px;font-weight:400;color:#4a5869;letter-spacing:0.11px;-webkit-text-stroke:0.35px #4a5869;'>projectna_1b@steady-mouse.sys.rootnet.io</div><div class='t' style='left:866.9px;top:495.1px;font-size:20px;font-weight:400;color:#2a78e4;letter-spacing:0.17px;-webkit-text-stroke:0.35px #2a78e4;'>steady-mouse.sys.rootnet.io</div><div class='t' style='left:1188.8px;top:494.2px;font-size:20px;font-weight:400;color:#4a5869;letter-spacing:0.02px;-webkit-text-stroke:0.35px #4a5869;'>185.173.20.37 | 2a0b:3100:20::c</div><div class='t' style='left:1544.0px;top:494.2px;font-size:20px;font-weight:400;color:#4a5869;letter-spacing:0.12px;-webkit-text-stroke:0.35px #4a5869;'>Next.js</div><div class='t' style='left:1699.9px;top:495.1px;font-size:20px;font-weight:400;color:#4a5869;letter-spacing:-0.18px;-webkit-text-stroke:0.35px #4a5869;'>Vandaag, 09:07</div><div class='t' style='left:1903.6px;top:494.2px;font-size:20px;font-weight:400;color:#4a5869;letter-spacing:0.0px;-webkit-text-stroke:0.35px #4a5869;transform:scaleX(0.945);transform-origin:0 0;'>72 KB</div><div class='t' style='left:382.0px;top:593.8px;font-size:20px;font-weight:700;color:#4a5869;letter-spacing:-0.53px;'>Tags:</div><div class='t' style='left:452.7px;top:593.8px;font-size:20px;font-weight:400;color:#ffffff;letter-spacing:0.26px;-webkit-text-stroke:0.35px #ffffff;'>Klantnaam</div><div class='t' style='left:412.2px;top:716.0px;font-size:20px;font-weight:400;color:#4a5869;letter-spacing:0.57px;-webkit-text-stroke:0.35px #4a5869;'>Metrics</div><div class='t' style='left:415.6px;top:798.3px;font-size:20px;font-weight:400;color:#4a5869;letter-spacing:0.0px;-webkit-text-stroke:0.35px #4a5869;transform:scaleX(1.07);transform-origin:0 0;'>Instellingen</div><div class='t' style='left:412.0px;top:881.3px;font-size:20px;font-weight:400;color:#4a5869;letter-spacing:0.0px;-webkit-text-stroke:0.35px #4a5869;transform:scaleX(1.057);transform-origin:0 0;'>Domeinnamen</div><div class='t' style='left:412.0px;top:964.5px;font-size:20px;font-weight:400;color:#4a5869;letter-spacing:0.33px;-webkit-text-stroke:0.35px #4a5869;'>Rewrites</div><div class='t' style='left:412.0px;top:1046.9px;font-size:20px;font-weight:400;color:#4a5869;letter-spacing:0.07px;-webkit-text-stroke:0.35px #4a5869;'>Backups</div><div class='t' style='left:416.6px;top:1129.7px;font-size:20px;font-weight:400;color:#4a5869;letter-spacing:0.51px;-webkit-text-stroke:0.35px #4a5869;'>Malware alerts</div><div class='t' style='left:411.2px;top:1212.7px;font-size:20px;font-weight:400;color:#4a5869;letter-spacing:0.0px;-webkit-text-stroke:0.35px #4a5869;transform:scaleX(1.062);transform-origin:0 0;'>Deployment tools</div><div class='t' style='left:416.8px;top:1295.5px;font-size:20px;font-weight:400;color:#4a5869;letter-spacing:0.27px;-webkit-text-stroke:0.35px #4a5869;'>Toegang</div><div class='t' style='left:411.2px;top:1378.2px;font-size:20px;font-weight:400;color:#4a5869;letter-spacing:0.42px;-webkit-text-stroke:0.35px #4a5869;'>Geoblocking</div><div class='t' style='left:1715.9px;top:725.2px;font-size:20px;font-weight:400;color:#4a5869;letter-spacing:0.23px;-webkit-text-stroke:0.35px #4a5869;'>Weergeven voor:</div><div class='t' style='left:1905.9px;top:724.4px;font-size:20px;font-weight:400;color:#222222;letter-spacing:0.19px;-webkit-text-stroke:0.35px #222222;'>Afgelopen uur</div><div class='t' style='left:1377.3px;top:773.6px;font-size:25px;font-weight:400;color:#333333;letter-spacing:0.0px;-webkit-text-stroke:0px #333333;transform:scaleX(0.912);transform-origin:0 0;'>CPU</div><div class='t' style='left:1352.7px;top:1106.7px;font-size:25px;font-weight:400;color:#333333;letter-spacing:0.0px;-webkit-text-stroke:0px #333333;transform:scaleX(1.08);transform-origin:0 0;'>Memory</div><div class='t' style='left:732.0px;top:826.4px;font-size:16px;font-weight:400;color:#666666;letter-spacing:0.0px;-webkit-text-stroke:0px #666666;transform:scaleX(0.93);transform-origin:0 0;'>100%</div><div class='t' style='left:741.3px;top:891.2px;font-size:16px;font-weight:400;color:#666666;letter-spacing:0.0px;-webkit-text-stroke:0px #666666;transform:scaleX(0.9);transform-origin:0 0;'>50%</div><div class='t' style='left:751.2px;top:956.4px;font-size:16px;font-weight:400;color:#666666;letter-spacing:0.0px;-webkit-text-stroke:0px #666666;transform:scaleX(0.826);transform-origin:0 0;'>0%</div><div class='t' style='left:718.2px;top:1147.7px;font-size:16px;font-weight:400;color:#666666;letter-spacing:0.0px;-webkit-text-stroke:0px #666666;transform:scaleX(0.935);transform-origin:0 0;'>100%</div><div class='t' style='left:727.4px;top:1213.6px;font-size:16px;font-weight:400;color:#666666;letter-spacing:0.0px;-webkit-text-stroke:0px #666666;transform:scaleX(0.91);transform-origin:0 0;'>50%</div><div class='t' style='left:737.8px;top:1279.0px;font-size:16px;font-weight:400;color:#666666;letter-spacing:0.0px;-webkit-text-stroke:0px #666666;transform:scaleX(0.817);transform-origin:0 0;'>0%</div><div class='t' style='left:1198.7px;top:1014.4px;font-size:18px;font-weight:700;color:#333333;letter-spacing:0.0px;transform:scaleX(0.926);transform-origin:0 0;'>MySQL</div><div class='t' style='left:1313.1px;top:1014.4px;font-size:18px;font-weight:700;color:#333333;letter-spacing:0.16px;'>supervisor-projectna_1b</div><div class='t' style='left:1584.0px;top:1014.4px;font-size:18px;font-weight:700;color:#333333;letter-spacing:-0.23px;'>nginx</div><div class='t' style='left:1198.7px;top:1347.5px;font-size:18px;font-weight:700;color:#333333;letter-spacing:0.0px;transform:scaleX(0.926);transform-origin:0 0;'>MySQL</div><div class='t' style='left:1313.1px;top:1347.5px;font-size:18px;font-weight:700;color:#333333;letter-spacing:0.16px;'>supervisor-projectna_1b</div><div class='t' style='left:1584.0px;top:1347.5px;font-size:18px;font-weight:700;color:#333333;letter-spacing:-0.23px;'>nginx</div><div class='t' style='left:749.5px;width:120px;text-align:center;top:975px;font-size:16px;color:#666'>09:35</div><div class='t' style='left:737.3px;width:120px;text-align:center;top:1298.2px;font-size:16px;color:#666'>09:35</div><div class='t' style='left:855.75px;width:120px;text-align:center;top:975px;font-size:16px;color:#666'>09:40</div><div class='t' style='left:844.5999999999999px;width:120px;text-align:center;top:1298.2px;font-size:16px;color:#666'>09:40</div><div class='t' style='left:962.0px;width:120px;text-align:center;top:975px;font-size:16px;color:#666'>09:45</div><div class='t' style='left:951.9px;width:120px;text-align:center;top:1298.2px;font-size:16px;color:#666'>09:45</div><div class='t' style='left:1068.25px;width:120px;text-align:center;top:975px;font-size:16px;color:#666'>09:50</div><div class='t' style='left:1059.1999999999998px;width:120px;text-align:center;top:1298.2px;font-size:16px;color:#666'>09:50</div><div class='t' style='left:1174.5px;width:120px;text-align:center;top:975px;font-size:16px;color:#666'>09:55</div><div class='t' style='left:1166.5px;width:120px;text-align:center;top:1298.2px;font-size:16px;color:#666'>09:55</div><div class='t' style='left:1280.75px;width:120px;text-align:center;top:975px;font-size:16px;color:#666'>10:00</div><div class='t' style='left:1273.8px;width:120px;text-align:center;top:1298.2px;font-size:16px;color:#666'>10:00</div><div class='t' style='left:1387.0px;width:120px;text-align:center;top:975px;font-size:16px;color:#666'>10:05</div><div class='t' style='left:1381.1px;width:120px;text-align:center;top:1298.2px;font-size:16px;color:#666'>10:05</div><div class='t' style='left:1493.25px;width:120px;text-align:center;top:975px;font-size:16px;color:#666'>10:10</div><div class='t' style='left:1488.4px;width:120px;text-align:center;top:1298.2px;font-size:16px;color:#666'>10:10</div><div class='t' style='left:1599.5px;width:120px;text-align:center;top:975px;font-size:16px;color:#666'>10:15</div><div class='t' style='left:1595.6999999999998px;width:120px;text-align:center;top:1298.2px;font-size:16px;color:#666'>10:15</div><div class='t' style='left:1705.75px;width:120px;text-align:center;top:975px;font-size:16px;color:#666'>10:20</div><div class='t' style='left:1703.0px;width:120px;text-align:center;top:1298.2px;font-size:16px;color:#666'>10:20</div><div class='t' style='left:1812.0px;width:120px;text-align:center;top:975px;font-size:16px;color:#666'>10:25</div><div class='t' style='left:1810.3px;width:120px;text-align:center;top:1298.2px;font-size:16px;color:#666'>10:25</div><div class='t' style='left:1918.25px;width:120px;text-align:center;top:975px;font-size:16px;color:#666'>10:30</div><div class='t' style='left:1917.6px;width:120px;text-align:center;top:1298.2px;font-size:16px;color:#666'>10:30</div><div class='t' style='left:1964.3px;width:120px;text-align:right;top:975px;font-size:16px;color:#666'>10:35</div><div class='t' style='left:1966px;width:120px;text-align:right;top:1298.2px;font-size:16px;color:#666'>10:35</div><div class='t' style='left:1981.6px;width:40px;text-align:center;top:107px;font-size:14px;font-weight:700;color:#fff;letter-spacing:-0.2px'>41</div></div>
</div>
</body></html>
